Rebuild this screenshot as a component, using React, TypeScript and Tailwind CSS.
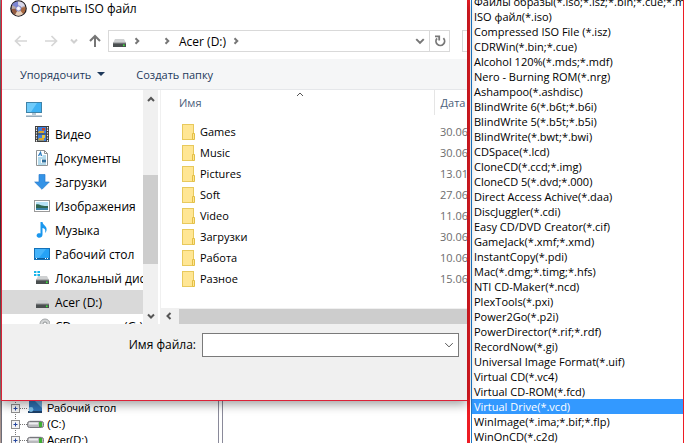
import type { ReactNode } from 'react';

const formats = [
  'Файлы образы(*.iso;*.isz;*.bin;*.cue;*.mds',
  'ISO файл(*.iso)',
  'Compressed ISO File (*.isz)',
  'CDRWin(*.bin;*.cue)',
  'Alcohol 120%(*.mds;*.mdf)',
  'Nero - Burning ROM(*.nrg)',
  'Ashampoo(*.ashdisc)',
  'BlindWrite 6(*.b6t;*.b6i)',
  'BlindWrite 5(*.b5t;*.b5i)',
  'BlindWrite(*.bwt;*.bwi)',
  'CDSpace(*.lcd)',
  'CloneCD(*.ccd;*.img)',
  'CloneCD 5(*.dvd;*.000)',
  'Direct Access Achive(*.daa)',
  'DiscJuggler(*.cdi)',
  'Easy CD/DVD Creator(*.cif)',
  'GameJack(*.xmf;*.xmd)',
  'InstantCopy(*.pdi)',
  'Mac(*.dmg;*.timg;*.hfs)',
  'NTI CD-Maker(*.ncd)',
  'PlexTools(*.pxi)',
  'Power2Go(*.p2i)',
  'PowerDirector(*.rif;*.rdf)',
  'RecordNow(*.gi)',
  'Universal Image Format(*.uif)',
  'Virtual CD(*.vc4)',
  'Virtual CD-ROM(*.fcd)',
  'Virtual Drive(*.vcd)',
  'WinImage(*.ima;*.bif;*.flp)',
  'WinOnCD(*.c2d)',
];

const folders = [
  ['Games', '30.06.2016'],
  ['Music', '30.06.2016'],
  ['Pictures', '13.01.2016'],
  ['Soft', '27.06.2016'],
  ['Video', '11.06.2016'],
  ['Загрузки', '30.06.2016'],
  ['Работа', '10.06.2016'],
  ['Разное', '15.06.2016'],
];

type ChevronProps = { dir: 'up' | 'down' | 'left' | 'right'; color: string; size?: number; weight?: number };

function Chevron({ dir, color, size = 8, weight = 2 }: ChevronProps) {
  const d = {
    up: 'M1 6 L4 3 L7 6',
    down: 'M1 2.5 L4 5.5 L7 2.5',
    left: 'M5.5 1 L2.5 4 L5.5 7',
    right: 'M2.5 1.2 L5.3 4 L2.5 6.8',
  }[dir];
  return (
    <svg width={size} height={size} viewBox="0 0 8 8" fill="none" stroke={color} strokeWidth={(weight * 8) / size} className="shrink-0">
      <path d={d} />
    </svg>
  );
}

function Arrow({ dir, color }: { dir: 'left' | 'right' | 'up'; color: string }) {
  const d = {
    left: 'M13 7 H2 M6.5 2 L1.5 7 L6.5 12',
    right: 'M1 7 H12 M7.5 2 L12.5 7 L7.5 12',
    up: 'M7 13 V2 M2 7 L7 2 L12 7',
  }[dir];
  return (
    <svg width="14" height="14" viewBox="0 0 14 14" fill="none" stroke={color} strokeWidth={dir === 'up' ? 2 : 1.7} className="shrink-0">
      <path d={d} />
    </svg>
  );
}

function DiscLogo() {
  return (
    <svg width="17" height="17" viewBox="0 0 17 17" className="shrink-0">
      <circle cx="8.5" cy="8.5" r="7.6" fill="#b9a9a6" stroke="#1d1a20" strokeWidth="1.4" />
      <path d="M8.5 8.5 L2 5 A7.2 7.2 0 0 1 8 1.5 Z" fill="#7c86d4" />
      <path d="M8.5 8.5 L8 1.5 A7.2 7.2 0 0 1 15 5.5 Z" fill="#d8d8ea" />
      <path d="M8.5 8.5 L15.3 7 A7.2 7.2 0 0 1 13 14 Z" fill="#a8673f" />
      <path d="M8.5 8.5 L13 14 A7.2 7.2 0 0 1 5 14.8 Z" fill="#e6cdb6" />
      <path d="M8.5 8.5 L5 14.8 A7.2 7.2 0 0 1 1.6 9 Z" fill="#935a3f" />
      <circle cx="8.5" cy="8.5" r="2.6" fill="#e9e6f2" stroke="#6470c0" strokeWidth="0.8" />
      <circle cx="8.5" cy="8.5" r="0.9" fill="#fff" />
    </svg>
  );
}

function Drive({ badge = false }: { badge?: boolean }) {
  return (
    <svg width="16" height="14" viewBox="0 0 16 14" className="shrink-0">
      {badge && <path d="M0 0h2.4v2H0zM3.4 0H6v2H3.4zM0 3h2.4v2H0zM3.4 3H6v2H3.4z" fill="#18b4e8" />}
      <path d="M4 5 H13 L15 9 H2 Z" fill="#cfd1d2" />
      <rect x="2" y="9" width="13" height="4" fill="#4a4f50" />
      <rect x="2" y="8.5" width="13" height="1" fill="#8d9091" />
      <rect x="12" y="10.5" width="1.6" height="1.6" fill="#39e639" />
    </svg>
  );
}

function Monitor() {
  return (
    <svg width="16" height="16" viewBox="0 0 16 16" className="shrink-0">
      <rect x="0.5" y="0.5" width="15" height="10" fill="#3fb2f4" stroke="#3f83a8" />
      <path d="M1 1 H11 L5 10 H1 Z" fill="#6fcbfa" />
      <path d="M6 11 H10 V13 H6 Z" fill="#b6c9d6" />
      <path d="M0 14.2 H16" stroke="#8aa3b5" strokeWidth="1.4" />
    </svg>
  );
}

function Film() {
  return (
    <svg width="16" height="16" viewBox="0 0 16 16" className="shrink-0">
      <rect x="1" y="0" width="14" height="16" fill="#3c3c3c" />
      <path d="M2.5 1 V16 M13.5 1 V16" stroke="#f0f0f0" strokeWidth="1.2" strokeDasharray="1.4 1.2" />
      <rect x="4" y="1" width="8" height="6.5" fill="#3c7fe0" />
      <rect x="4" y="8.5" width="8" height="6.5" fill="#3c7fe0" />
      <path d="M5 5 H10 V7 H4 Z M5 12 H10 V14.5 H4 Z" fill="#d9a62b" />
      <path d="M8 2 H11 V4.5 H8 Z" fill="#c3452f" />
      <path d="M8 9 H11 V12 H8 Z" fill="#e2c640" />
    </svg>
  );
}

function Doc() {
  return (
    <svg width="16" height="16" viewBox="0 0 16 16" className="shrink-0">
      <path d="M2.5 0.5 H10.5 L13.5 3.5 V15.5 H2.5 Z" fill="#fff" stroke="#8f9395" />
      <path d="M10.5 0.5 V3.5 H13.5" fill="none" stroke="#8f9395" />
      <path d="M4.5 6 L6.5 2.5 L7.5 6" fill="none" stroke="#2f7ec0" strokeWidth="1.3" />
      <path d="M8.5 6 H12 M4 8 H12 M4 10 H7 M4 12 H7 M4 14 H12" stroke="#68b5d8" />
      <rect x="8" y="9.5" width="4" height="3" fill="#2f6f9c" />
    </svg>
  );
}

function Download() {
  return (
    <svg width="16" height="16" viewBox="0 0 16 16" className="shrink-0">
      <path d="M5 0.5 H11 V8 H15.3 L8 15.3 L0.7 8 H5 Z" fill="#3493e6" stroke="#2b7ccc" strokeWidth="0.7" />
    </svg>
  );
}

function Picture() {
  return (
    <svg width="16" height="14" viewBox="0 0 16 14" className="shrink-0">
      <rect x="0.5" y="1.5" width="15" height="11" fill="#fff" stroke="#9a9a9a" />
      <rect x="2" y="3" width="12" height="8" fill="#b7e2f5" />
      <path d="M2 5.5 C5 4.5 7 7.5 14 7 V9 H2 Z" fill="#2f6650" />
      <path d="M2 9 H14 V11 H2 Z" fill="#3c83a8" />
    </svg>
  );
}

function Note() {
  return (
    <svg width="16" height="16" viewBox="0 0 16 16" className="shrink-0">
      <path d="M6.5 0 H8.5 C9 3.5 13.5 4 12.5 8.5 C12 10 11.5 10.5 11 11 C12 8 11 6.5 8.5 6 V12.5 C8.5 15 6.5 16 4.5 15.7 C2 15.2 2 12 4.5 11.3 C5.5 11 6 11.2 6.5 11.5 Z" fill="#1a97ee" />
    </svg>
  );
}

function Desktop() {
  return (
    <svg width="16" height="14" viewBox="0 0 16 14" className="shrink-0">
      <rect x="0.5" y="1.5" width="15" height="11" fill="#25a2f6" stroke="#1471b8" />
      <path d="M1 2 H12 L5 11 H1 Z" fill="#45b4fb" />
      <path d="M1 11.5 H15" stroke="#0d5c9c" />
      <path d="M2 11.5 H3 M11 11.5 H12 M13 11.5 H14" stroke="#fff" />
    </svg>
  );
}

function Disc() {
  return (
    <svg width="16" height="16" viewBox="0 0 16 16" className="shrink-0">
      <circle cx="11" cy="6" r="5" fill="#d2d4d5" stroke="#a3a6a8" />
      <circle cx="11" cy="6" r="2" fill="#fff" stroke="#8f9294" />
    </svg>
  );
}

function Folder() {
  return (
    <svg width="13" height="16" viewBox="0 0 13 16" className="shrink-0">
      <rect x="0.5" y="0.5" width="11" height="15" fill="#ffe694" stroke="#e8c95c" />
      <path d="M10.5 9.5 H12.5 V15.5 H10.5 Z" fill="#ffe694" stroke="#e3bf45" />
    </svg>
  );
}

function Expander() {
  return (
    <svg width="16" height="16" viewBox="0 0 16 16" className="shrink-0">
      <path d="M4.5 0 V16" stroke="#777" strokeDasharray="1 1" />
      <path d="M9 8.5 H16" stroke="#777" strokeDasharray="1 1" />
      <rect x="0.5" y="4.5" width="8" height="8" fill="#f4f4f4" stroke="#8f8f8f" />
      <path d="M2.5 8.5 H6.5 M4.5 6.5 V10.5" stroke="#26479e" />
    </svg>
  );
}

function TreeDesktop() {
  return (
    <svg width="17" height="16" viewBox="0 0 17 16" className="shrink-0">
      <path d="M2 1 H15 V11 H2 Z" fill="#2e72b4" />
      <path d="M8 1 H15 V8 Z" fill="#6ba5d4" />
      <path d="M1 11 H15 V13 H1 Z" fill="#1c3f66" />
      <circle cx="4" cy="9.5" r="2.4" fill="#7cc0e8" />
    </svg>
  );
}

function TreeDrive() {
  return (
    <svg width="17" height="16" viewBox="0 0 17 16" className="shrink-0">
      <path d="M3 4 H14 L16 6.5 H1 Z" fill="#e5e5e7" />
      <rect x="0.5" y="5.5" width="16" height="6" rx="2" fill="#b9b9bd" stroke="#77777c" />
      <rect x="2" y="6.5" width="9" height="2" fill="#ededf0" />
      <rect x="12" y="6" width="3" height="5" fill="#3fae33" />
    </svg>
  );
}

const places: { icon: ReactNode; label: string; active?: boolean }[] = [
  { icon: <Film />, label: 'Видео' },
  { icon: <Doc />, label: 'Документы' },
  { icon: <Download />, label: 'Загрузки' },
  { icon: <Picture />, label: 'Изображения' },
  { icon: <Note />, label: 'Музыка' },
  { icon: <Desktop />, label: 'Рабочий стол' },
  { icon: <Drive badge />, label: 'Локальный диск' },
  { icon: <Drive />, label: 'Acer (D:)', active: true },
];

const tree = [
  { icon: <TreeDesktop />, label: 'Рабочий стол' },
  { icon: <TreeDrive />, label: '(C:)' },
  { icon: <TreeDrive />, label: 'Acer(D:)' },
];

function NavBar() {
  return (
    <nav className="flex h-[41px] items-center pt-[5px] pl-3">
      <button aria-label="Назад"><Arrow dir="left" color="#d6d6d6" /></button>
      <button aria-label="Вперёд" className="ml-4"><Arrow dir="right" color="#d6d6d6" /></button>
      <button aria-label="Последние" className="ml-3"><Chevron dir="down" color="#d0d0d0" /></button>
      <button aria-label="Вверх" className="ml-2.5"><Arrow dir="up" color="#767676" /></button>
      <div className="ml-1.5 flex h-[22px] min-w-0 flex-1 items-center border border-[#d9d9d9] pl-0.5">
        <Drive />
        <span className="ml-1 flex w-8 pl-0.5"><Chevron dir="right" color="#777" /></span>
        <Chevron dir="right" color="#777" />
        <button className="ml-2 whitespace-nowrap">Acer (D:)</button>
        <span className="ml-1.5 flex-1"><Chevron dir="right" color="#777" /></span>
        <button aria-label="Предыдущие расположения" className="mr-1"><Chevron dir="down" color="#777" size={10} weight={2} /></button>
        <button aria-label="Обновить" className="flex h-full w-5 items-center justify-center border-l border-[#d9d9d9]">
          <svg width="12" height="12" viewBox="0 0 12 12" fill="none" stroke="#777" strokeWidth="1.8">
            <path d="M9.4 3.2 A4.3 4.3 0 1 1 3 3.4" />
            <path d="M1 1.4 H5.2 V5.4" />
          </svg>
        </button>
      </div>
      <input aria-label="Поиск" className="ml-3 h-[22px] w-[5px] border border-r-0 border-[#d9d9d9]" />
    </nav>
  );
}

function Sidebar() {
  return (
    <aside className="flex w-[159px] shrink-0 border-r border-[#f0f0f0]">
      <ul className="min-w-0 flex-1 overflow-hidden pt-2">
        <li className="flex h-6 items-center pl-6"><Monitor /></li>
        {places.map((p) => (
          <li key={p.label}>
            <button className={`flex h-6 w-full items-center gap-[5px] pl-8 whitespace-nowrap ${p.active ? 'bg-[#d9d9d9]' : ''}`}>
              {p.icon}
              {p.label}
            </button>
          </li>
        ))}
        <li>
          <button className="flex h-6 w-full items-center gap-[5px] pl-8 whitespace-nowrap">
            <Disc />
            <span className="w-[70px] text-left">CD</span>
            (G:)
          </button>
        </li>
      </ul>
      <div className="mr-0.5 flex w-[15px] flex-col items-center bg-[#f0f0f0]">
        <span className="flex h-[85px] items-start pt-[5px]"><Chevron dir="up" color="#555" /></span>
        <span className="h-[89px] w-full bg-[#cdcdcd]" />
        <span className="flex flex-1 items-end pb-1"><Chevron dir="down" color="#555" /></span>
      </div>
    </aside>
  );
}

function FileList() {
  return (
    <div className="flex min-w-0 flex-1 flex-col overflow-hidden">
      <table className="w-[400px] table-fixed border-collapse text-left text-[11px]">
        <thead>
          <tr className="h-[25px] text-[#4c607a]">
            <th className="w-[273px] border-r border-[#e5e5e5] p-0 pl-[18px] font-normal">
              <span className="flex h-[25px] items-center">
                <span className="w-[117px]">Имя</span>
                <span className="self-start"><Chevron dir="up" color="#555" weight={1} /></span>
              </span>
            </th>
            <th className="p-0 pl-1.5 font-normal whitespace-nowrap">Дата изменения</th>
          </tr>
        </thead>
        <tbody>
          <tr className="h-1.5"><td className="p-0" /></tr>
          {folders.map(([name, date]) => (
            <tr key={name} className="h-[21px]">
              <td className="p-0 pl-[21px]">
                <span className="flex items-center gap-[5px]"><Folder />{name}</span>
              </td>
              <td className="p-0 pl-1.5 text-[#6d6d6d]">{date}</td>
            </tr>
          ))}
        </tbody>
      </table>
      <div className="mt-auto flex h-4 items-center bg-[#f0f0f0] pl-1">
        <Chevron dir="left" color="#555" />
        <span className="ml-1.5 h-[15px] flex-1 bg-[#cdcdcd]" />
      </div>
    </div>
  );
}

function OpenDialog() {
  return (
    <section className="z-10 border-b border-l border-[#dc2238] bg-white shadow-[0_3px_10px_rgba(0,0,0,0.4)]">
      <header className="flex h-[18px] items-center gap-1 pb-px pl-2">
        <DiscLogo />
        <h1>Открыть ISO файл</h1>
      </header>
      <NavBar />
      <div className="flex h-[31px] items-center border-b border-[#e5e7ea] bg-[#f5f6f7] pl-[18px] text-[11px] text-[#1e395b]">
        <button className="flex items-center gap-1.5">
          Упорядочить
          <svg width="8" height="4" viewBox="0 0 8 4"><path d="M0 0 H8 L4 4 Z" fill="#1e395b" /></svg>
        </button>
        <button className="ml-[31px]">Создать папку</button>
      </div>
      <div className="flex h-[234px]">
        <Sidebar />
        <FileList />
      </div>
      <div className="flex h-[76px] items-start bg-[#f0f0f0] pt-[9px] pr-2">
        <label htmlFor="filename" className="w-[194px] text-right leading-6">Имя файла:</label>
        <div className="ml-1.5 flex h-6 flex-1 items-center border border-[#7a7a7a] bg-white pr-1">
          <input id="filename" className="h-full min-w-0 flex-1 px-1 outline-none" />
          <button aria-label="Показать список"><Chevron dir="down" color="#555" size={10} weight={1} /></button>
        </div>
      </div>
    </section>
  );
}

export default function App() {
  return (
    <main className="flex h-screen overflow-hidden bg-white font-['Open_Sans','Noto_Sans',sans-serif] text-xs leading-[15px] text-black">
      <div className="w-px shrink-0 bg-linear-to-b from-[#8a8a8a] via-[#4a3c3c] to-[#b09a92]" />
      <div className="flex min-w-0 flex-1 flex-col">
        <OpenDialog />
        <div className="flex min-h-0 flex-1 border-l border-[#6c6c78] font-['Liberation_Sans',Arial,sans-serif] text-[11px]">
          <ul className="-mt-px w-[217px] overflow-hidden border-r border-[#8a8a9a] pl-[9px]">
            {tree.map((t) => (
              <li key={t.label} className="flex h-4 items-center">
                <Expander />
                {t.icon}
                <span className="pl-[3px]">{t.label}</span>
              </li>
            ))}
          </ul>
          <div className="ml-[3px] flex-1 border-l border-[#8a8a9a]" />
        </div>
      </div>
      <div className="w-[217px] shrink-0 overflow-hidden border-r border-l-3 border-[#ed1c24]">
        <ul role="listbox" aria-label="Тип файла" className="-mt-1.5 ml-px border-l border-[#1a78c8] text-[11px]">
          {formats.map((f) => (
            <li
              key={f}
              role="option"
              aria-selected={f.startsWith('Virtual Drive')}
              className={`h-[15px] pl-0.5 whitespace-nowrap ${f.startsWith('Virtual Drive') ? 'bg-[#3399ff] text-white' : ''}`}
            >
              {f}
            </li>
          ))}
        </ul>
      </div>
    </main>
  );
}
